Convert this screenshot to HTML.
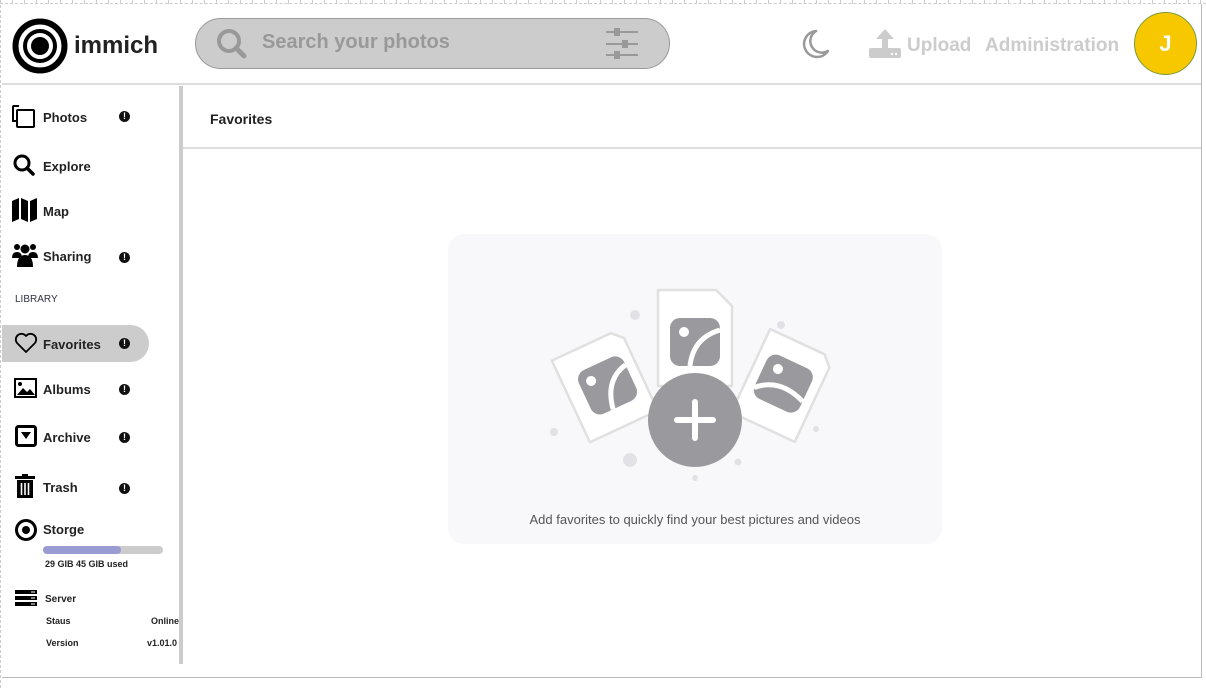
<!DOCTYPE html>
<html><head><meta charset="utf-8"><style>
*{box-sizing:border-box;margin:0;padding:0}
body{width:1206px;height:688px;background:#fff;font-family:"Liberation Sans",Arial,sans-serif;position:relative;overflow:hidden}
.frame{position:absolute;left:2px;top:4px;width:1200px;height:674px;border-right:1px solid #bbb;border-bottom:1px solid #bbb}
.ruler{position:absolute;left:0;top:0;width:1206px;height:4px;background:repeating-linear-gradient(90deg,#ccc 0 1px,transparent 1px 12px);border-bottom:1px dashed #ccc}
.lruler{position:absolute;left:0;top:0;width:2px;height:688px;border-left:1px dashed #ccc}
.abs{position:absolute}
.nav{position:absolute;left:43px;font-weight:bold;font-size:13px;color:#222}
.ex{position:absolute;left:119px;width:11px;height:11px;border-radius:50%;background:#111;color:#fff;font-size:9px;font-weight:bold;text-align:center;line-height:11px}
</style></head><body>
<div class="ruler"></div><div class="lruler"></div>
<div class="frame"></div>
<svg class="abs" style="left:12px;top:18px" width="56" height="56" viewBox="0 0 56 56"><circle cx="28" cy="28" r="24.5" fill="none" stroke="#000" stroke-width="6"/><circle cx="28" cy="28" r="15" fill="none" stroke="#000" stroke-width="4"/><circle cx="28" cy="28" r="9" fill="#000"/></svg>
<div class="abs" style="left:74px;top:32px;font-size:24px;font-weight:bold;color:#222">immich</div>
<div class="abs" style="left:195px;top:18px;width:475px;height:51px;border-radius:26px;background:#ccc;border:1px solid #999"></div>
<svg class="abs" style="left:215px;top:27px" width="34" height="34" viewBox="0 0 34 34"><circle cx="14" cy="14" r="10" fill="none" stroke="#999" stroke-width="4"/><path d="M21 21l8 8" stroke="#999" stroke-width="5" stroke-linecap="round"/></svg>
<div class="abs" style="left:262px;top:31px;font-size:20px;font-weight:bold;color:#999">Search your photos</div>
<svg class="abs" style="left:604px;top:28px" width="36" height="32" viewBox="0 0 36 32"><g stroke="#999" stroke-width="2"><path d="M2 4h32M2 16h32M2 27h32"/></g><g fill="#999"><rect x="10" y="0" width="6" height="8"/><rect x="18" y="12" width="6" height="8"/><rect x="10" y="23" width="6" height="8"/></g></svg>
<svg class="abs" style="left:798px;top:27px" width="34" height="34" viewBox="0 0 34 34"><path d="M18 4A13 13 0 1 0 30 24A11 11 0 0 1 18 4Z" fill="none" stroke="#999" stroke-width="2.5" stroke-linejoin="round"/></svg>
<svg class="abs" style="left:868px;top:28px" width="34" height="32" viewBox="0 0 34 32"><path d="M17 1l-9 10h6v10h6V11h6z" fill="#ccc"/><rect x="1" y="20" width="32" height="10" rx="2" fill="#ccc"/><circle cx="24" cy="26" r="1.2" fill="#fff"/><circle cx="28" cy="26" r="1.2" fill="#fff"/></svg>
<div class="abs" style="left:907px;top:35px;font-size:19px;font-weight:bold;color:#ccc">Upload</div>
<div class="abs" style="left:985px;top:35px;font-size:19px;font-weight:bold;color:#ccc">Administration</div>
<div class="abs" style="left:1134px;top:12px;width:63px;height:63px;border-radius:50%;background:#f7c800;border:1px solid #7a9a3a;color:#fff;font-weight:bold;font-size:22px;text-align:center;line-height:62px">J</div>
<div class="abs" style="left:2px;top:83px;width:1199px;height:2px;background:#ddd"></div>
<div class="abs" style="left:179px;top:86px;width:4px;height:578px;background:#ccc"></div>
<svg class="abs" style="left:12px;top:105px" width="24" height="24" viewBox="0 0 24 24"><path d="M7 1H2a1 1 0 0 0-1 1v14h3" fill="none" stroke="#000" stroke-width="2"/><rect x="5" y="5" width="17" height="17" rx="1" fill="none" stroke="#000" stroke-width="2"/></svg>
<div class="nav" style="top:110px">Photos</div><div class="ex" style="top:111px">!</div>
<svg class="abs" style="left:12px;top:153px" width="24" height="24" viewBox="0 0 24 24"><circle cx="10" cy="10" r="7" fill="none" stroke="#000" stroke-width="3"/><path d="M15 15l6 6" stroke="#000" stroke-width="3.5" stroke-linecap="round"/></svg>
<div class="nav" style="top:159px">Explore</div>
<svg class="abs" style="left:12px;top:198px" width="25" height="24" viewBox="0 0 25 24"><path d="M0 3l7-3v21l-7 3zM9 0l7 3v21l-7-3zM18 3l7-3v21l-7 3z" fill="#000"/></svg>
<div class="nav" style="top:204px">Map</div>
<svg class="abs" style="left:12px;top:243px" width="26" height="24" viewBox="0 0 26 24"><circle cx="5" cy="4" r="3"/><circle cx="21" cy="4" r="3"/><circle cx="13" cy="6" r="4.5"/><path d="M0 15q0-6 5-6t5 6zM16 15q0-6 5-6t5 6z"/><path d="M5 24q0-12 8-12t8 12z"/></svg>
<div class="nav" style="top:249px">Sharing</div><div class="ex" style="top:252px">!</div>
<div class="abs" style="left:15px;top:294px;font-size:10px;color:#334">LIBRARY</div>
<div class="abs" style="left:2px;top:325px;width:147px;height:37px;border-radius:0 19px 19px 0;background:#ccc"></div>
<svg class="abs" style="left:14px;top:332px" width="24" height="22" viewBox="0 0 24 22"><path d="M12 20L3 11A5.5 5.5 0 0 1 12 4A5.5 5.5 0 0 1 21 11Z" fill="none" stroke="#000" stroke-width="1.8" stroke-linejoin="round"/></svg>
<div class="nav" style="top:337px">Favorites</div><div class="ex" style="top:338px">!</div>
<svg class="abs" style="left:14px;top:378px" width="23" height="20" viewBox="0 0 23 20"><rect x="1" y="1" width="21" height="18" fill="none" stroke="#000" stroke-width="2"/><circle cx="6" cy="6" r="2"/><path d="M3 17l6-7 4 4 3-3 5 6z"/></svg>
<div class="nav" style="top:382px">Albums</div><div class="ex" style="top:384px">!</div>
<svg class="abs" style="left:15px;top:425px" width="22" height="22" viewBox="0 0 22 22"><rect x="1.5" y="1.5" width="19" height="19" rx="2" fill="none" stroke="#000" stroke-width="3"/><path d="M6 7h10l-5 7z"/></svg>
<div class="nav" style="top:430px">Archive</div><div class="ex" style="top:432px">!</div>
<svg class="abs" style="left:15px;top:474px" width="20" height="24" viewBox="0 0 20 24"><rect x="0" y="2" width="20" height="3"/><rect x="7" y="0" width="6" height="3"/><path d="M2 6h16v18H2z"/><path d="M6.5 9v12M10 9v12M13.5 9v12" stroke="#fff" stroke-width="1.6"/></svg>
<div class="nav" style="top:480px">Trash</div><div class="ex" style="top:483px">!</div>
<svg class="abs" style="left:14px;top:518px" width="24" height="24" viewBox="0 0 24 24"><circle cx="12" cy="12" r="9.5" fill="none" stroke="#000" stroke-width="3"/><circle cx="12" cy="12" r="4"/></svg>
<div class="nav" style="top:522px">Storge</div>
<div class="abs" style="left:43px;top:546px;width:120px;height:8px;border-radius:4px;background:#ccc"><div style="width:78px;height:8px;border-radius:4px;background:#9b9bd4"></div></div>
<div class="abs" style="left:45px;top:559px;font-size:9px;font-weight:bold;color:#222">29 GIB 45 GIB used</div>
<svg class="abs" style="left:15px;top:590px" width="22" height="17" viewBox="0 0 22 17"><rect width="22" height="4"/><rect y="6" width="22" height="4"/><rect y="12" width="22" height="4"/><g fill="#fff"><rect x="16" y="1.5" width="4" height="1"/><rect x="16" y="7.5" width="4" height="1"/><rect x="16" y="13.5" width="4" height="1"/></g></svg>
<div class="abs" style="left:45px;top:594px;font-size:10px;font-weight:bold;color:#222">Server</div>
<div class="abs" style="left:46px;top:616px;font-size:9px;font-weight:bold;color:#222">Staus</div>
<div class="abs" style="left:151px;top:616px;font-size:9px;font-weight:bold;color:#222">Online</div>
<div class="abs" style="left:46px;top:638px;font-size:9px;font-weight:bold;color:#222">Version</div>
<div class="abs" style="left:147px;top:638px;font-size:9px;font-weight:bold;color:#222">v1.01.0</div>
<div class="abs" style="left:210px;top:111px;font-size:14px;font-weight:bold;color:#222">Favorites</div>
<div class="abs" style="left:183px;top:147px;width:1018px;height:2px;background:#ddd"></div>
<div class="abs" style="left:448px;top:234px;width:494px;height:310px;border-radius:16px;background:#f8f8fa"></div>
<svg class="abs" style="left:530px;top:280px" width="320" height="210" viewBox="0 0 320 210">
<g fill="#e2e2e6"><circle cx="105" cy="35" r="5"/><circle cx="251" cy="45" r="4"/><circle cx="24" cy="152" r="4"/><circle cx="100" cy="180" r="7"/><circle cx="208" cy="182" r="3.5"/><circle cx="165" cy="198" r="3"/><circle cx="286" cy="149" r="3"/></g>
<g transform="rotate(-25 75 100)"><path d="M35 60h65l10 10v80H35z" fill="#fff" stroke="#e0e0e0" stroke-width="2.5" stroke-linejoin="round"/><rect x="50" y="82" width="50" height="48" rx="10" fill="#9a9a9e"/><circle cx="62" cy="95" r="5" fill="#fff"/><path d="M70 130q5-30 30-35" fill="none" stroke="#fff" stroke-width="5"/></g>
<path d="M128 10h58l16 16v80h-74z" fill="#fff" stroke="#e0e0e0" stroke-width="2.5" stroke-linejoin="round"/>
<rect x="140" y="38" width="50" height="48" rx="10" fill="#9a9a9e"/><circle cx="154" cy="52" r="5" fill="#fff"/><path d="M160 86q3-28 30-36" fill="none" stroke="#fff" stroke-width="5"/>
<g transform="rotate(25 255 100)"><path d="M220 60h60l10 10v82h-70z" fill="#fff" stroke="#e0e0e0" stroke-width="2.5" stroke-linejoin="round"/><rect x="230" y="80" width="50" height="48" rx="10" fill="#9a9a9e"/><circle cx="244" cy="93" r="5" fill="#fff"/><path d="M230 120q20-20 50-8" fill="none" stroke="#fff" stroke-width="5"/></g>
<circle cx="165" cy="140" r="47" fill="#9a9a9e"/>
<path d="M165 122v36M147 140h36" stroke="#fff" stroke-width="6" stroke-linecap="round"/>
</svg>
<div class="abs" style="left:448px;top:512px;width:494px;text-align:center;font-size:13px;color:#555">Add favorites to quickly find your best pictures and videos</div>
</body></html>
